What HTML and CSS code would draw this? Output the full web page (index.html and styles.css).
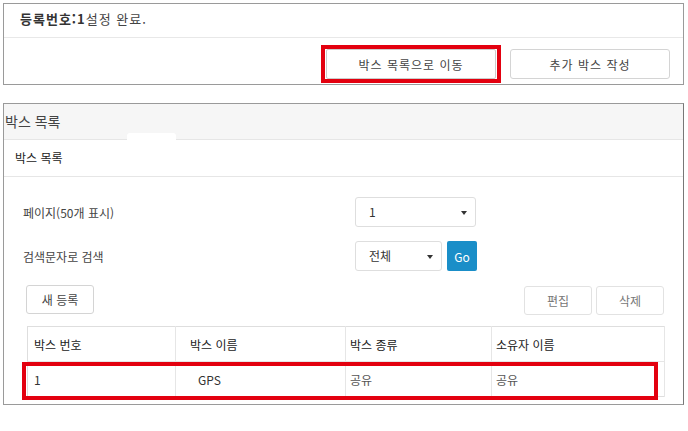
FILE: index.html
```html
<!DOCTYPE html>
<html lang="ko">
<head>
    <meta charset="UTF-8">
    <title>박스 목록</title>
    <link rel="stylesheet" href="styles.css">
</head>
<body>
    <div class="panel result-panel">
        <div class="result-head"><b>등록번호:1</b>설정 완료.</div>
        <div class="result-foot">
            <span class="mark"><button class="btn">박스 목록으로 이동</button></span>
            <button class="btn">추가 박스 작성</button>
        </div>
    </div>

    <div class="panel list-panel">
        <div class="list-title">박스 목록<span class="tab-gap"></span></div>
        <div class="list-sub">박스 목록</div>
        <div class="list-body">
            <div class="form-row">
                <label>페이지(50개 표시)</label>
                <div class="select wide">1<span class="caret"></span></div>
            </div>
            <div class="form-row">
                <label>검색문자로 검색</label>
                <div class="select">전체<span class="caret"></span></div>
                <button class="go">Go</button>
            </div>
            <div class="actions">
                <button class="btn small">새 등록</button>
                <div class="actions-right">
                    <button class="btn small muted">편집</button>
                    <button class="btn small muted">삭제</button>
                </div>
            </div>
            <div class="table-wrap">
                <table class="box-table">
                    <thead>
                        <tr>
                            <th>박스 번호</th>
                            <th>박스 이름</th>
                            <th>박스 종류</th>
                            <th>소유자 이름</th>
                        </tr>
                    </thead>
                    <tbody>
                        <tr>
                            <td>1</td>
                            <td class="name">GPS</td>
                            <td>공유</td>
                            <td>공유</td>
                        </tr>
                    </tbody>
                </table>
                <div class="row-mark"></div>
            </div>
        </div>
    </div>
</body>
</html>
```

FILE: styles.css
```css
body {
    margin: 0;
    padding: 3px 4px 0 3px;
    font-family: "Noto Sans CJK KR", "Liberation Sans", sans-serif;
    font-size: 12px;
    color: #333;
    background: #fff;
}

.panel {
    border: 1px solid #9a9a9a;
    background: #fff;
}

.result-panel {
    height: 80px;
    margin-bottom: 18px;
}

.result-head {
    height: 33px;
    line-height: 30px;
    padding-left: 16px;
    font-size: 13px;
    letter-spacing: 1px;
    color: #444;
    border-bottom: 1px solid #e8e8e8;
}

.result-head b {
    color: #333;
}

.result-foot {
    box-sizing: border-box;
    display: flex;
    justify-content: flex-end;
    align-items: center;
    gap: 9px;
    height: 46px;
    padding: 6px 13px 0 0;
}

.btn {
    font-family: inherit;
    font-size: 12px;
    color: #444;
    background: #fff;
    border: 1px solid #d4d4d4;
    border-radius: 3px;
    height: 30px;
    width: 160px;
    letter-spacing: 1px;
    cursor: pointer;
}

.mark {
    display: flex;
    border: 4px solid #e3000f;
    padding: 0 1px;
}

.mark .btn {
    width: 170px;
    border-color: #ccc;
    border-radius: 2px;
}

.list-panel {
    height: 300px;
    border-right-color: #777;
}

.list-title {
    position: relative;
    height: 35px;
    line-height: 34px;
    padding-left: 1px;
    font-size: 14px;
    color: #444;
    background: #f6f6f6;
    border-bottom: 1px solid #e6e6e6;
}

.tab-gap {
    position: absolute;
    left: 123px;
    bottom: -1px;
    width: 49px;
    height: 7px;
    background: #fff;
    border-radius: 3px 3px 0 0;
}

.list-sub {
    height: 36px;
    line-height: 36px;
    padding-left: 11px;
    font-size: 12px;
    color: #222;
    border-bottom: 1px solid #e6e6e6;
}

.list-body {
    padding: 20px 19px 0 18px;
}

.form-row {
    display: flex;
    align-items: center;
    gap: 5px;
    height: 30px;
    margin-bottom: 14px;
}

.form-row label {
    width: 327px;
    padding-left: 1px;
    color: #444;
}

.select {
    position: relative;
    box-sizing: border-box;
    width: 87px;
    height: 30px;
    line-height: 28px;
    padding-left: 13px;
    border: 1px solid #dedede;
    border-radius: 3px;
    color: #333;
}

.select.wide {
    width: 121px;
}

.caret {
    position: absolute;
    right: 8px;
    top: 13px;
    border-left: 3px solid transparent;
    border-right: 3px solid transparent;
    border-top: 4px solid #333;
}

.go {
    width: 30px;
    height: 30px;
    border: none;
    border-radius: 2px;
    background: #1a8ec8;
    color: #fff;
    font-family: inherit;
    font-size: 12px;
    padding: 0;
}

.actions {
    display: flex;
    justify-content: space-between;
    align-items: flex-start;
    padding-left: 4px;
}

.actions-right {
    display: flex;
    gap: 4px;
    margin-top: 1px;
}

.btn.small {
    width: 68px;
    height: 29px;
    letter-spacing: 0;
}

.btn.muted {
    color: #777;
    border-color: #e2e2e2;
}

.table-wrap {
    position: relative;
    margin: 11px 0 0 5px;
    width: 638px;
}

.box-table {
    width: 100%;
    table-layout: fixed;
    border-collapse: collapse;
    border: 1px solid #dedede;
}

.box-table th,
.box-table td {
    box-sizing: border-box;
    text-align: left;
    height: 35px;
    padding: 0 4px;
    border-right: 1px solid #e6e6e6;
    color: #333;
}

.box-table th {
    font-weight: normal;
    color: #222;
    border-bottom: 1px solid #e6e6e6;
}

.box-table th:nth-child(1) { width: 148px; padding-left: 6px; }
.box-table th:nth-child(2) { width: 170px; padding-left: 14px; }
.box-table th:nth-child(3) { width: 146px; }

.box-table td:nth-child(1) {
    padding-left: 6px;
}

.box-table td:nth-child(3),
.box-table td:nth-child(4) {
    color: #555;
}

.box-table td.name {
    padding-left: 22px;
}

.row-mark {
    position: absolute;
    left: -5px;
    top: 36px;
    width: 628px;
    height: 30px;
    border: 4px solid #e3000f;
}
```
